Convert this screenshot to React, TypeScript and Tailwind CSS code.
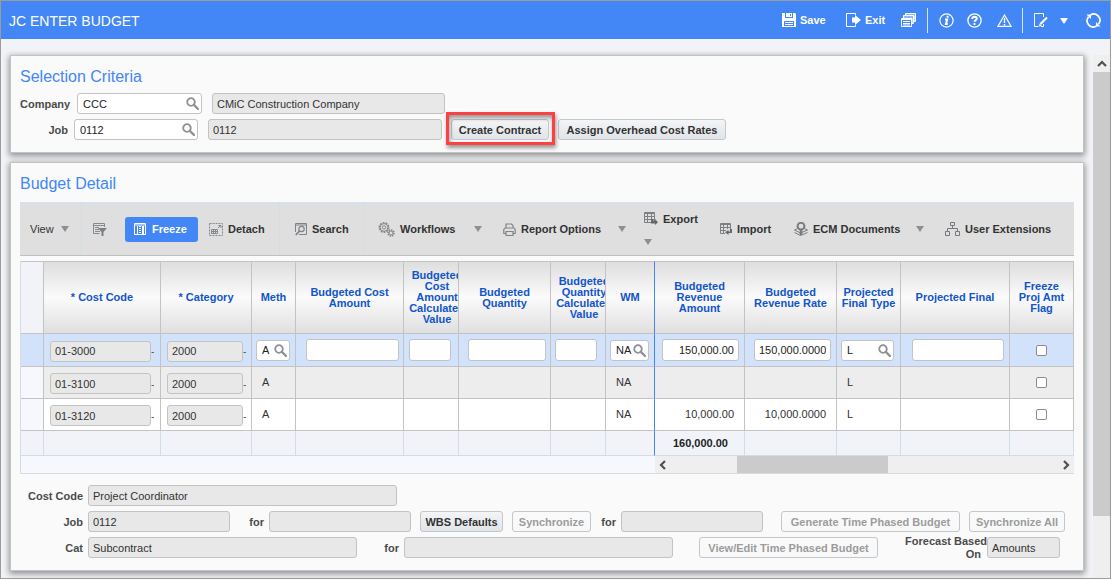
import React from 'react';

type IconProps = { className?: string };

const SearchIcon = () => (
  <svg width="13" height="13" viewBox="0 0 13 13" fill="none" stroke="#8d9095">
    <circle cx="5" cy="5" r="3.8" strokeWidth="1.8" />
    <path d="M8 8l4 4" strokeWidth="2.4" strokeLinecap="round" />
  </svg>
);

const Triangle = ({ className = 'text-[#8c9096]' }: IconProps) => (
  <svg className={className} width="8" height="6" viewBox="0 0 8 6" fill="currentColor">
    <path d="M0 0h8L4 6z" />
  </svg>
);

const Chevron = ({ className = '' }: IconProps) => (
  <svg className={className} width="10" height="10" viewBox="0 0 10 10" fill="none" stroke="#505050" strokeWidth="2.2">
    <path d="M1 7l4-4 4 4" />
  </svg>
);

const SaveIcon = () => (
  <svg width="14" height="14" viewBox="0 0 14 14">
    <path fill="#fff" fillRule="evenodd" d="M0 0h3v5h8V0h2l1 1v13H0zM2 8v5h10V8z" />
    <path fill="#fff" d="M4 0h6v4H4z" />
    <path fill="#4287f5" d="M8 1h1v2H8z" />
    <path stroke="#fff" d="M3 9.500h8M3 11.500h8" />
  </svg>
);

const ExitIcon = () => (
  <svg width="15" height="14" viewBox="0 0 15 14" fill="none" stroke="#fff">
    <path d="M9.500 2V.5h-9v13h9V12" />
    <path fill="#fff" stroke="none" d="M6 4.500h3V2l6 5-6 5V9.500H6z" />
  </svg>
);

const WindowsIcon = () => (
  <svg width="15" height="14" viewBox="0 0 15 14" fill="none" stroke="#fff">
    <path fill="#fff" fillOpacity=".4" d="M4.500 3V.5h10v8H13V2.500H4.500z" />
    <path fill="#fff" fillOpacity=".4" d="M2.500 5.500v-3h10v8H11v-5z" />
    <path d="M.5 5.500h10v8H.5zM.5 6.500h10M2 8.500h7M2 10.500h7M2 12h7" />
  </svg>
);

const InfoIcon = () => (
  <svg width="15" height="15" viewBox="0 0 15 15" fill="none" stroke="#fff">
    <circle cx="7.500" cy="7.500" r="6.600" strokeWidth="1.200" />
    <path strokeWidth="2" d="M8.600 2.800v2M6 6.500h2.200L7 11h1.800" />
  </svg>
);

const HelpIcon = () => (
  <svg width="15" height="15" viewBox="0 0 15 15" fill="none" stroke="#fff">
    <circle cx="7.500" cy="7.500" r="6.600" strokeWidth="1.300" />
    <path strokeWidth="2" d="M5.200 6c0-3 4.600-3 4.600-.4 0 1.500-2.300 1.500-2.300 3.200M7.500 10v2" />
  </svg>
);

const WarningIcon = () => (
  <svg width="15" height="13" viewBox="0 0 15 13" fill="none" stroke="#fff">
    <path strokeWidth="1.200" d="M7.500 1L14 12.300H1z" />
    <path strokeWidth="1.400" d="M7.500 4v5M7.500 10v1.500" />
  </svg>
);

const EditIcon = () => (
  <svg width="14" height="14" viewBox="0 0 14 14" fill="none" stroke="#fff">
    <path d="M9.500 4V.5h-9v13h4M9.500 11v2.500H7" />
    <path strokeWidth="2.200" d="M13 4.500L6.500 11" />
    <path fill="#fff" stroke="none" d="M5 13.500l.6-3 2.200 2.200z" />
  </svg>
);

const RefreshIcon = () => (
  <svg width="15" height="15" viewBox="0 0 15 15" fill="none" stroke="#fff" strokeWidth="1.700">
    <path d="M4.500 1.900a6.200 6.200 0 0 1 8 9.200M10.500 13.100a6.200 6.200 0 0 1-8-9.200" />
    <path fill="#fff" stroke="none" d="M.5 1.500H5V6zM14.500 13.500H10V9z" />
  </svg>
);

const FilterIcon = () => (
  <svg width="14" height="13" viewBox="0 0 14 13" fill="none" stroke="#868a8f">
    <path d="M11.500 4V.5H.5v10h6M1 2.500h10M2 4.500h4M2 6.500h4M2 8.500h5" />
    <path fill="#7c8085" stroke="none" d="M5 5h9l-3.500 4v4h-2V9z" />
  </svg>
);

const FreezeIcon = () => (
  <svg width="12" height="12" viewBox="0 0 12 12" fill="none" stroke="#fff">
    <path d="M.5.5h11v11H.5zM1 2h10M3.500 3v8M8.500 3v8" />
    <path d="M5 3.500h2M5 5.500h2M5 7.500h2M5 9.500h2M9.500 3v8" />
  </svg>
);

const DetachIcon = () => (
  <svg width="14" height="13" viewBox="0 0 14 13" fill="none" stroke="#85888c">
    <path strokeDasharray="2 1" d="M.5.5h13v12H.5z" />
    <path d="M2.500 6.500h6v4h-6zM2.500 8.500h6M4.500 6v5M6.500 6v5M9 5l3-3M9.500 2.500H12V5" />
  </svg>
);

const FindIcon = () => (
  <svg width="12" height="13" viewBox="0 0 12 13" fill="none" stroke="#7f8286">
    <path d="M.5 9V.5h11v11H4M0 2h12" />
    <circle cx="6.500" cy="6" r="2.700" strokeWidth="1.200" />
    <path strokeWidth="1.800" d="M4.500 8L.8 12" />
  </svg>
);

const GearsIcon = () => (
  <svg width="17" height="15" viewBox="0 0 17 15" fill="none" stroke="#85888b">
    <circle cx="6" cy="5.500" r="4.700" strokeWidth="1.600" strokeDasharray="1.800 1.100" />
    <circle cx="6" cy="5.500" r="3.900" />
    <circle cx="6" cy="5.500" r="1.700" />
    <circle cx="13" cy="11" r="3" strokeWidth="1.600" strokeDasharray="1.400 .9" />
    <circle cx="13" cy="11" r="2" />
  </svg>
);

const PrintIcon = () => (
  <svg width="13" height="13" viewBox="0 0 13 13" fill="none" stroke="#808386" strokeWidth="1.200">
    <path d="M3 5V1h5.500L10 2.500V5M3 10.500H.8V6.500L2 5h9l1.200 1.500v4H10M3 8.500h7v4H3z" />
  </svg>
);

const ExportIcon = () => (
  <svg width="14" height="13" viewBox="0 0 14 13" fill="none" stroke="#7c7f83">
    <path d="M.5.5h10v10H.5zM1 1.500h9M1 4.500h9M1 7.500h9M3.500 1v9M7.500 1v9" />
    <path fill="#65686c" stroke="none" d="M7 7h2.500v2H11V7l3 3.200-3 2.800v-1.500H7z" />
  </svg>
);

const ImportIcon = () => (
  <svg width="12" height="12" viewBox="0 0 12 12" fill="none" stroke="#7c7f83">
    <path d="M5 10.500H.5V.5h10V6M1 1.500h9M1 4.500h9M1 7.500h5M3.500 1v9M7.500 1v5" />
    <path fill="#65686c" stroke="none" d="M12 6v4H8.500v2L5 9.300 8.500 7v1.500H10V6z" />
  </svg>
);

const EcmIcon = () => (
  <svg width="14" height="14" viewBox="0 0 14 14" fill="none" stroke="#7a7c7f">
    <circle cx="7" cy="4.200" r="3.400" strokeWidth="2" />
    <path strokeWidth="2.600" d="M7 7.500V13" />
    <path d="M3.500 6.500L.5 8l6 3 7-3-3-1.500M.5 10.500l6 3 7-3" />
  </svg>
);

const OrgIcon = () => (
  <svg width="15" height="14" viewBox="0 0 15 14" fill="none" stroke="#77797c">
    <path d="M5.500.5h4v3h-4zM.5 9.500h4v4h-4zM10.500 9.500h4v4h-4zM7.500 4v2.500M2.500 9V6.500h10V9" />
  </svg>
);

type FieldProps = {
  value?: string;
  label?: string;
  id?: string;
  width: string;
  align?: string;
};

const ReadOnlyField = ({ value = '', label, id, width }: FieldProps) => (
  <input
    id={id}
    aria-label={label}
    readOnly
    defaultValue={value}
    className={`${width} h-[21px] shrink-0 rounded-[3px] border border-[#c3c3c3] bg-[#e8e8e8] px-1 text-[#333]`}
  />
);

const TextField = ({ value = '', label, width, align = 'text-left' }: FieldProps) => (
  <input
    aria-label={label}
    defaultValue={value}
    className={`${width} ${align} block h-[22px] rounded-[3px] border border-[#c3c3c3] bg-white px-1 text-[#222]`}
  />
);

const LookupField = ({ value = '', label, id, width }: FieldProps) => (
  <div className={`${width} flex h-[21px] shrink-0 items-center rounded-[3px] border border-[#c3c3c3] bg-white pr-0.5`}>
    <input
      id={id}
      aria-label={id ? undefined : label}
      defaultValue={value}
      className="w-0 min-w-0 flex-1 bg-transparent pl-[5px] text-[#222] outline-none"
    />
    <button aria-label={`Look up ${label}`}>
      <SearchIcon />
    </button>
  </div>
);

type ActionProps = { children: React.ReactNode; width: string; disabled?: boolean };

const ActionButton = ({ children, width, disabled }: ActionProps) => (
  <button
    disabled={disabled}
    className={`${width} h-[21px] shrink-0 rounded-[3px] border border-[#c3c6ca] bg-linear-to-b from-[#f3f5f7] to-[#e1e4e8] text-center font-bold whitespace-nowrap text-[#333] disabled:from-[#fafafa] disabled:to-[#f8f8f8] disabled:text-[#9c9c9c]`}
  >
    {children}
  </button>
);

const Panel = ({ title, children }: { title: string; children: React.ReactNode }) => (
  <section className="border border-[#c3c3c3] bg-[#fafafa] px-[9px] shadow-[0_2px_6px_1px_rgba(0,0,0,0.4)]">
    <h2 className="pt-[11px] text-base leading-5 text-[#4287f5]">{title}</h2>
    {children}
  </section>
);

const ToolbarButton = ({ icon, children }: { icon: React.ReactNode; children: React.ReactNode }) => (
  <button className="flex items-center gap-[5px] font-bold whitespace-nowrap text-[#333]">
    {icon}
    {children}
  </button>
);

const columns = [
  { title: '* Cost Code', width: 'w-[117px]' },
  { title: '* Category', width: 'w-[91px]' },
  { title: 'Meth', width: 'w-[44px]' },
  { title: 'Budgeted Cost Amount', width: 'w-[108px]' },
  { title: 'Budgeted Cost Amount Calculated Value', width: 'w-[55px]', clipped: true },
  { title: 'Budgeted Quantity', width: 'w-[92px]' },
  { title: 'Budgeted Quantity Calculated Value', width: 'w-[55px]', clipped: true },
  { title: 'WM', width: 'w-[49px]', frozen: true },
  { title: 'Budgeted Revenue Amount', width: 'w-[90px]' },
  { title: 'Budgeted Revenue Rate', width: 'w-[92px]' },
  { title: 'Projected Final Type', width: 'w-[64px]' },
  { title: 'Projected Final', width: 'w-[109px]' },
  { title: 'Freeze Proj Amt Flag', width: 'w-[64px]' },
];

const rows = [
  { code: '01-3000', category: '2000', meth: 'A', wm: 'NA', amount: '150,000.00', rate: '150,000.0000', type: 'L', selected: true },
  { code: '01-3100', category: '2000', meth: 'A', wm: 'NA', amount: '', rate: '', type: 'L', bg: 'bg-[#ededed]' },
  { code: '01-3120', category: '2000', meth: 'A', wm: 'NA', amount: '10,000.00', rate: '10,000.0000', type: 'L', bg: 'bg-white' },
];

const cell = 'border-r border-b border-[#c3c3c3] p-0';
const frozenCell = 'border-r border-b border-r-[#4287f5] border-b-[#c3c3c3] p-0';

const BudgetRow = ({ row }: { row: (typeof rows)[number] }) => {
  const keyCell = (value: string, width: string, label: string) => (
    <td className={cell}>
      <div className="flex items-center overflow-hidden pt-0.5 pl-1.5">
        <ReadOnlyField value={value} width={width} label={label} />
        <span className="w-[3px] overflow-hidden text-[#555]">-</span>
      </div>
    </td>
  );

  if (row.selected) {
    return (
      <tr className="h-[33px] bg-[#d3e2fb]">
        <td className={cell}></td>
        {keyCell(row.code, 'w-[101px]', 'Cost Code')}
        {keyCell(row.category, 'w-[76px]', 'Category')}
        <td className={cell}><div className="pl-1"><LookupField value={row.meth} width="w-[34px]" label="Meth" /></div></td>
        <td className={cell}><div className="flex justify-end pr-1"><TextField width="w-[93px]" label="Budgeted Cost Amount" /></div></td>
        <td className={cell}><div className="pl-[5px]"><TextField width="w-[42px]" label="Budgeted Cost Amount Calculated Value" /></div></td>
        <td className={cell}><div className="flex justify-end pr-1"><TextField width="w-[78px]" label="Budgeted Quantity" /></div></td>
        <td className={cell}><div className="pl-1"><TextField width="w-[42px]" label="Budgeted Quantity Calculated Value" /></div></td>
        <td className={frozenCell}><div className="pl-1"><LookupField value={row.wm} width="w-[39px]" label="WM" /></div></td>
        <td className={cell}><div className="flex justify-end pr-[5px]"><TextField value={row.amount} width="w-[77px]" align="text-right" label="Budgeted Revenue Amount" /></div></td>
        <td className={cell}><div className="flex justify-end pr-[5px]"><TextField value={row.rate} width="w-[77px]" align="text-right" label="Budgeted Revenue Rate" /></div></td>
        <td className={cell}><div className="pl-1"><LookupField value={row.type} width="w-[53px]" label="Projected Final Type" /></div></td>
        <td className={cell}><div className="flex justify-end pr-[5px]"><TextField width="w-[92px]" label="Projected Final" /></div></td>
        <td className={cell}><FlagBox /></td>
      </tr>
    );
  }

  return (
    <tr className={`${row.bg} h-[32px] text-[#333]`}>
      <td className={`${cell} bg-[#f6f8fd]`}></td>
      {keyCell(row.code, 'w-[101px]', 'Cost Code')}
      {keyCell(row.category, 'w-[76px]', 'Category')}
      <td className={cell}><div className="pb-0.5 pl-2.5">{row.meth}</div></td>
      <td className={cell}></td>
      <td className={cell}></td>
      <td className={cell}></td>
      <td className={cell}></td>
      <td className={frozenCell}><div className="pb-0.5 pl-2.5">{row.wm}</div></td>
      <td className={cell}><div className="pr-2.5 pb-0.5 text-right">{row.amount}</div></td>
      <td className={cell}><div className="pr-2.5 pb-0.5 text-right">{row.rate}</div></td>
      <td className={cell}><div className="pb-0.5 pl-2.5">{row.type}</div></td>
      <td className={cell}></td>
      <td className={cell}><FlagBox /></td>
    </tr>
  );
};

const FlagBox = () => (
  <input
    type="checkbox"
    aria-label="Freeze Proj Amt Flag"
    className="mx-auto block size-[11px] appearance-none rounded-[2px] border border-[#8a8a98] bg-white checked:bg-[#4287f5]"
  />
);

const Header = () => (
  <header className="flex h-[38px] items-center bg-[#4287f5] pr-[9px] pl-2 text-white">
    <h1 className="flex-1 pt-0.5 text-sm">JC ENTER BUDGET</h1>
    <nav className="flex items-center font-bold">
      <button className="flex w-[64px] items-center gap-1"><SaveIcon />Save</button>
      <button className="flex w-[55px] items-center gap-1"><ExitIcon />Exit</button>
      <button className="mr-[11px]" aria-label="Windows"><WindowsIcon /></button>
      <div className="mr-[11px] h-[25px] w-px bg-white/80"></div>
      <button className="mr-[13px]" aria-label="Information"><InfoIcon /></button>
      <button className="mr-[15px]" aria-label="Help"><HelpIcon /></button>
      <button className="mr-2.5" aria-label="Warnings"><WarningIcon /></button>
      <div className="mr-[11px] h-[25px] w-px bg-white/80"></div>
      <button className="mr-3" aria-label="Edit"><EditIcon /></button>
      <button className="mr-[18px] pt-0.5" aria-label="Edit options"><Triangle className="text-white" /></button>
      <button aria-label="Refresh"><RefreshIcon /></button>
    </nav>
  </header>
);

const SelectionCriteria = () => (
  <Panel title="Selection Criteria">
    <div className="flex flex-col gap-[5px] pt-1.5 pb-3">
      <div className="flex items-center">
        <label htmlFor="company" className="w-[57px] font-bold text-[#4b4b4b]">Company</label>
        <LookupField id="company" value="CCC" label="Company" width="w-[125px]" />
        <div className="w-2.5"></div>
        <ReadOnlyField value="CMiC Construction Company" label="Company name" width="w-[233px]" />
      </div>
      <div className="flex items-center">
        <label htmlFor="job" className="w-[54px] pr-1.5 text-right font-bold text-[#4b4b4b]">Job</label>
        <LookupField id="job" value="0112" label="Job" width="w-[124px]" />
        <div className="w-2.5"></div>
        <ReadOnlyField value="0112" label="Job name" width="w-[234px]" />
        <div className="relative mx-[9px]">
          <ActionButton width="w-[98px]">Create Contract</ActionButton>
          <div className="pointer-events-none absolute -top-[7px] -right-1.5 -bottom-[5px] -left-[5px] border-3 border-[#fb4141] shadow-[1px_3px_4px_rgba(0,0,0,0.4),inset_1px_3px_4px_rgba(0,0,0,0.4)]"></div>
        </div>
        <ActionButton width="w-[168px]">Assign Overhead Cost Rates</ActionButton>
      </div>
    </div>
  </Panel>
);

const Toolbar = () => (
  <div className="mt-2 flex h-[54px] items-center border-t border-b border-t-[#cfe0f8] border-b-[#c0c0c0] bg-[#dfdfdf]">
    <button className="flex h-full w-[62px] items-center gap-[7px] border-r border-[#d3dde4] pl-2.5 text-[#333]">
      View <Triangle />
    </button>
    <div className="flex w-[43px] pl-[11px]">
      <button aria-label="Query by example"><FilterIcon /></button>
    </div>
    <button className="flex h-[25px] w-[73px] items-center gap-1.5 rounded-[3px] bg-[#4287f5] pl-[9px] font-bold text-white">
      <FreezeIcon />Freeze
    </button>
    <div className="flex h-full w-[82px] border-r border-[#d3dde4] pl-[11px]">
      <ToolbarButton icon={<DetachIcon />}>Detach</ToolbarButton>
    </div>
    <div className="flex h-full w-[85px] border-r border-[#d3dde4] pl-[15px]">
      <ToolbarButton icon={<FindIcon />}>Search</ToolbarButton>
    </div>
    <div className="flex w-[138px] items-center justify-between pr-[21px] pl-[13px]">
      <ToolbarButton icon={<GearsIcon />}>Workflows</ToolbarButton>
      <button aria-label="Workflows menu"><Triangle /></button>
    </div>
    <div className="flex w-[141px] items-center justify-between pr-[18px]">
      <ToolbarButton icon={<PrintIcon />}>Report Options</ToolbarButton>
      <button aria-label="Report menu"><Triangle /></button>
    </div>
    <div className="flex w-[76px] flex-col items-start pb-0.5">
      <ToolbarButton icon={<ExportIcon />}>Export</ToolbarButton>
      <button className="pt-[13px]" aria-label="Export menu"><Triangle /></button>
    </div>
    <div className="w-[74px]">
      <ToolbarButton icon={<ImportIcon />}>Import</ToolbarButton>
    </div>
    <div className="flex w-[151px] items-center justify-between pr-[21px]">
      <ToolbarButton icon={<EcmIcon />}>ECM Documents</ToolbarButton>
      <button aria-label="ECM menu"><Triangle /></button>
    </div>
    <ToolbarButton icon={<OrgIcon />}>User Extensions</ToolbarButton>
  </div>
);

const BudgetTable = () => (
  <div className="mt-[5px] border-b border-l border-[#d3dde4]">
    <table className="w-full table-fixed border-separate border-spacing-0">
      <thead>
        <tr className="h-[73px] text-[#1155cc]">
          <th className="w-[23px] border border-l-0 border-[#c3c3c3] bg-[#f1f3f8] p-0"></th>
          {columns.map((column) => (
            <th
              key={column.title}
              className={`${column.width} ${column.frozen ? 'border-r-[#4287f5]' : 'border-r-[#c3c3c3]'} overflow-hidden border-t border-r border-b border-t-[#c3c3c3] border-b-[#c3c3c3] bg-linear-to-b from-[#dedede] via-[#fbfbfb] to-[#dfdfdf] p-0 leading-[11px]`}
            >
              <div className={column.clipped ? 'ml-1 w-[58px]' : 'px-1'}>{column.title}</div>
            </th>
          ))}
        </tr>
      </thead>
      <tbody>
        {rows.map((row) => (
          <BudgetRow key={row.code} row={row} />
        ))}
      </tbody>
      <tfoot>
        <tr className="h-[25px] bg-[#f1f3f8] font-bold text-[#222]">
          <td className="border-r border-b border-[#d3dde4] p-0"></td>
          {columns.map((column) => (
            <td
              key={column.title}
              className={`${column.frozen ? 'border-r-[#4287f5]' : 'border-r-[#d3dde4]'} border-r border-b border-b-[#d3dde4] p-0`}
            >
              {column.title === 'Budgeted Revenue Amount' && <div className="pr-4 text-right">160,000.00</div>}
            </td>
          ))}
        </tr>
      </tfoot>
    </table>
    <div className="flex h-[17px] bg-[#f6f8fd]">
      <div className="w-[634px] shrink-0"></div>
      <div className="flex flex-1 items-center justify-between bg-[#efefef] px-[3px]">
        <Chevron className="-rotate-90" />
        <div className="mr-[97px] ml-auto h-full w-[151px] shrink-0 bg-[#cbcbcb]"></div>
        <div className="flex w-[86px] justify-end"><Chevron className="rotate-90" /></div>
      </div>
    </div>
  </div>
);

const DetailForm = () => (
  <div className="flex flex-col gap-[5px] pt-[11px] pb-3 text-[#4b4b4b]">
    <div className="flex items-center">
      <label htmlFor="cost-code" className="w-[68px] pr-[5px] text-right font-bold">Cost Code</label>
      <ReadOnlyField id="cost-code" value="Project Coordinator" width="w-[309px]" />
    </div>
    <div className="flex items-center">
      <label htmlFor="detail-job" className="w-[68px] pr-[5px] text-right font-bold">Job</label>
      <ReadOnlyField id="detail-job" value="0112" width="w-[142px]" />
      <label htmlFor="job-for" className="w-[39px] pr-[5px] text-right font-bold">for</label>
      <ReadOnlyField id="job-for" width="w-[142px]" />
      <div className="ml-[9px] flex gap-[9px]">
        <ActionButton width="w-[83px]">WBS Defaults</ActionButton>
        <ActionButton width="w-[79px]" disabled>Synchronize</ActionButton>
      </div>
      <label htmlFor="sync-for" className="w-[30px] pr-[5px] text-right font-bold">for</label>
      <ReadOnlyField id="sync-for" width="w-[142px]" />
      <div className="ml-[18px] flex gap-[9px]">
        <ActionButton width="w-[179px]" disabled>Generate Time Phased Budget</ActionButton>
        <ActionButton width="w-[96px]" disabled>Synchronize All</ActionButton>
      </div>
    </div>
    <div className="flex h-[21px] items-center">
      <label htmlFor="cat" className="w-[68px] pr-[5px] text-right font-bold">Cat</label>
      <ReadOnlyField id="cat" value="Subcontract" width="w-[269px]" />
      <label htmlFor="cat-for" className="w-[47px] pr-[5px] text-right font-bold">for</label>
      <ReadOnlyField id="cat-for" width="w-[269px]" />
      <div className="w-[26px]"></div>
      <ActionButton width="w-[179px]" disabled>View/Edit Time Phased Budget</ActionButton>
      <label htmlFor="forecast" className="w-[109px] text-right leading-[13px] font-bold">
        Forecast Based<br /><span className="pr-1.5">On</span>
      </label>
      <ReadOnlyField id="forecast" value="Amounts" width="w-[73px]" />
    </div>
  </div>
);

const App = () => (
  <div className="flex min-h-screen flex-col border border-[#9b9b9b] bg-[#f1f3f6] font-['Liberation_Sans',Arial,sans-serif] text-[11px] leading-[14px]">
    <Header />
    <div className="flex flex-1 pt-4">
      <main className="flex min-w-0 flex-1 flex-col gap-[9px] px-[9px] pb-[7px]">
        <SelectionCriteria />
        <Panel title="Budget Detail">
          <Toolbar />
          <BudgetTable />
          <DetailForm />
        </Panel>
      </main>
      <div className="flex w-[17px] shrink-0 flex-col bg-[#efefef]">
        <div className="flex h-[17px] items-center justify-center"><Chevron /></div>
        <div className="mb-[62px] flex-1 bg-[#cbcbcb]"></div>
      </div>
    </div>
  </div>
);

export default App;
